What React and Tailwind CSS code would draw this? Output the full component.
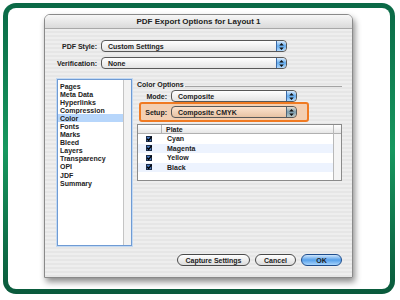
import React from 'react';

const SECTIONS = [
  'Pages', 'Meta Data', 'Hyperlinks', 'Compression', 'Color', 'Fonts', 'Marks',
  'Bleed', 'Layers', 'Transparency', 'OPI', 'JDF', 'Summary',
];

const PLATES = ['Cyan', 'Magenta', 'Yellow', 'Black'];

function Stepper({ tinted }) {
  const tone = tinted
    ? 'border-[#4d6478] from-[#e4dcd0] via-[#7a9cae] to-[#b9c8c6]'
    : 'border-[#3a6aa8] from-[#d9ecfd] via-[#62abee] to-[#b3dafc]';
  return (
    <div className={`w-[10px] h-full rounded-r-[4px] border-l bg-gradient-to-b flex items-center justify-center ${tone}`}>
      <svg width="5" height="7" viewBox="0 0 5 7">
        <path d="M2.5 0 L4.8 2.6 H0.2 Z M0.2 4.4 H4.8 L2.5 7 Z" fill="#111" />
      </svg>
    </div>
  );
}

function Popup({ value, className, tinted }) {
  return (
    <div className={`h-[12px] flex rounded-[4px] border border-[#585858] overflow-hidden ${className}`}>
      <div className="flex-1 pl-[6px] flex items-center text-[7px] font-bold leading-none">{value}</div>
      <Stepper tinted={tinted} />
    </div>
  );
}

function Check() {
  return (
    <svg width="6" height="6" viewBox="0 0 6 6">
      <rect x="0.5" y="0.5" width="5" height="5" fill="#4f7fc4" stroke="#1c2d4a" />
      <path d="M1.2 2.8 L2.6 4.4 L5.6 0.6" fill="none" stroke="#000" strokeWidth="1.4" />
    </svg>
  );
}

function Button({ children, className }) {
  return (
    <div className={`h-[12px] rounded-full border flex items-center justify-center text-[7px] font-bold leading-none ${className}`}>
      {children}
    </div>
  );
}

export default function App() {
  return (
    <div className="w-[400px] h-[300px] bg-white pt-[3px] pl-[3px] font-['Liberation_Sans',Arial,sans-serif] text-[#222]">
      <div className="w-[392px] h-[291px] rounded-[13px] bg-gradient-to-b from-[#0a6946] via-[#17985f] to-[#0a5a3c] p-[5px]">
        <div className="h-full rounded-[8px] bg-white pl-[36px] pt-[6px]">
          <div className="w-[309px] h-[264px] box-border rounded-t-[6px] border border-[#8a8a8a] shadow-[2px_4px_6px_rgba(0,0,0,0.45)] flex flex-col overflow-hidden">
            <div className="h-[14px] shrink-0 border-b border-[#a8a8a8] bg-gradient-to-b from-[#f7f7f7] to-[#dadada] flex items-center justify-center text-[8px] font-bold leading-none">
              PDF Export Options for Layout 1
            </div>

            <div className="flex-1 flex flex-col bg-[repeating-linear-gradient(180deg,#eeeeee_0px,#eeeeee_2px,#e6e6e6_2px,#e6e6e6_4px)] pt-[11px]">
              <div className="flex items-center h-[12px]">
                <div className="w-[52px] text-right text-[7px] font-bold leading-none">PDF Style:</div>
                <Popup value="Custom Settings" className="ml-[4px] w-[186px] bg-gradient-to-b from-white to-[#e4e4e4]" />
              </div>
              <div className="flex items-center h-[12px] mt-[5px]">
                <div className="w-[52px] text-right text-[7px] font-bold leading-none">Verification:</div>
                <Popup value="None" className="ml-[4px] w-[186px] bg-gradient-to-b from-white to-[#e4e4e4]" />
              </div>

              <div className="flex mt-[10px] ml-[12px]">
                <div className="w-[75px] h-[167px] border border-[#6f9bd4] shadow-[0_0_0_1px_#c3d9f2] bg-white flex">
                  <div className="flex-1 pt-[2px] flex flex-col">
                    {SECTIONS.map((s) => (
                      <div
                        key={s}
                        className={`h-[8.1px] pl-[2px] flex items-center text-[7px] font-bold leading-none ${s === 'Color' ? 'bg-[#b7d6fb]' : ''}`}
                      >
                        {s}
                      </div>
                    ))}
                  </div>
                  <div className="w-[8px] border-l border-[#c4c4c4] bg-[#f2f2f2]" />
                </div>

                <div className="ml-[5px] w-[205px] flex flex-col">
                  <div className="h-[10px] flex items-center">
                    <span className="text-[7px] font-bold leading-none">Color Options</span>
                    <div className="flex-1 h-px bg-[#a4a4a4] ml-[1px] mt-[4px]" />
                  </div>
                  <div className="flex items-center h-[12px] mt-[1px]">
                    <div className="w-[30px] text-right text-[7px] font-bold leading-none">Mode:</div>
                    <Popup value="Composite" className="ml-[4px] w-[126px] bg-gradient-to-b from-white to-[#e4e4e4]" />
                  </div>
                  <div className="ml-[2px] w-[170px] h-[20px] rounded-[3px] border-2 border-[#f07a22] bg-[#f3cfb2] flex items-center">
                    <div className="w-[26px] text-right text-[7px] font-bold leading-none">Setup:</div>
                    <Popup tinted value="Composite CMYK" className="ml-[4px] w-[126px] bg-gradient-to-b from-[#fbe3cf] to-[#e8c3a4]" />
                  </div>

                  <div className="mt-[2px] h-[57px] border border-[#8a8a8a] bg-white flex">
                    <div className="flex-1 flex flex-col">
                      <div className="h-[9px] flex border-b border-[#b0b0b0] bg-gradient-to-b from-white to-[#e6e6e6]">
                        <div className="w-[24px] border-r border-[#b5b5b5]" />
                        <div className="pl-[4px] flex items-center text-[7px] font-bold leading-none">Plate</div>
                      </div>
                      {PLATES.map((p, i) => (
                        <div key={p} className={`h-[9.5px] flex items-center ${i % 2 ? 'bg-[#edf3fe]' : 'bg-white'}`}>
                          <div className="w-[24px] pl-[8px] flex items-center">
                            <Check />
                          </div>
                          <div className="pl-[5px] text-[7px] font-bold leading-none">{p}</div>
                        </div>
                      ))}
                    </div>
                    <div className="w-[8px] border-l border-[#b8b8b8] flex flex-col">
                      <div className="h-[9px] border-b border-[#b0b0b0] bg-gradient-to-b from-white to-[#e6e6e6]" />
                      <div className="flex-1 bg-[#f4f4f4]" />
                    </div>
                  </div>
                </div>
              </div>

              <div className="flex justify-end gap-[5px] mt-[8px] pr-[10px]">
                <Button className="w-[73px] border-[#4a4a4a] bg-gradient-to-b from-white to-[#dcdcdc]">Capture Settings</Button>
                <Button className="w-[41px] border-[#4a4a4a] bg-gradient-to-b from-white to-[#dcdcdc]">Cancel</Button>
                <Button className="w-[41px] border-[#1f4d8c] bg-gradient-to-b from-[#cde5fb] via-[#55a0ea] to-[#a6d3fb]">OK</Button>
              </div>
            </div>
          </div>
        </div>
      </div>
    </div>
  );
}
